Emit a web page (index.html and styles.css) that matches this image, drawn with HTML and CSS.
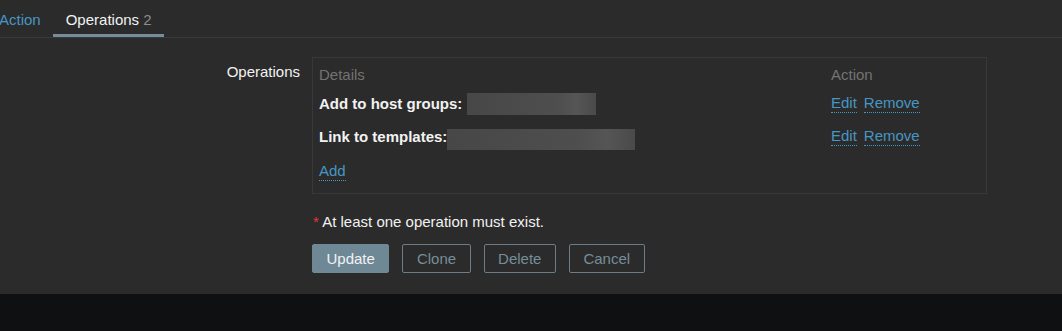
FILE: index.html
```html
<!DOCTYPE html>
<html lang="en">

<head>
    <meta charset="UTF-8">
    <title>Action - Operations</title>
    <link rel="stylesheet" href="styles.css">
</head>

<body>
    <div class="page">
        <ul class="tabs">
            <li><a href="#">Action</a></li>
            <li class="active"><a href="#">Operations <span class="count">2</span></a></li>
        </ul>

        <form class="form">
            <div class="form-row">
                <label class="form-label">Operations</label>
                <div class="form-field">
                    <div class="op-table">
                        <div class="op-head">Details</div>
                        <div class="op-head">Action</div>

                        <div class="op-cell"><b>Add to host groups:</b><span class="hidden-val w1"></span></div>
                        <div class="op-cell"><a class="link" href="#">Edit</a><a class="link" href="#">Remove</a></div>

                        <div class="op-cell"><b>Link to templates:</b><span class="hidden-val w2"></span></div>
                        <div class="op-cell"><a class="link" href="#">Edit</a><a class="link" href="#">Remove</a></div>

                        <div class="op-cell add-cell"><a class="link" href="#">Add</a></div>
                    </div>

                    <p class="note"><span class="req">*</span> At least one operation must exist.</p>

                    <div class="buttons">
                        <button type="submit" class="btn primary">Update</button>
                        <button type="button" class="btn alt">Clone</button>
                        <button type="button" class="btn alt">Delete</button>
                        <button type="button" class="btn alt">Cancel</button>
                    </div>
                </div>
            </div>
        </form>
    </div>
    <div class="footer"></div>
</body>

</html>
```

FILE: styles.css
```css
body {
    font-family: Arial, "Liberation Sans", sans-serif;
    font-size: 15px;
    line-height: 18px;
    background-color: #0e1012;
    color: #f2f2f2;
    margin: 0;
    padding: 0;
}

.page {
    background-color: #2b2b2b;
    height: 294px;
    overflow: hidden;
}

.footer {
    height: 37px;
}

.tabs {
    display: flex;
    list-style: none;
    margin: 0 0 0 -14px;
    padding: 0;
    border-bottom: 1px solid #393939;
}

.tabs a {
    display: block;
    padding: 5px 12px 0 13px;
    line-height: 29px;
    border-bottom: 3px solid transparent;
    color: #4796c4;
    text-decoration: none;
}

.tabs .active a {
    color: #f2f2f2;
    border-bottom-color: #768d99;
}

.count {
    color: #8b8b8b;
}

.form {
    margin-top: 19px;
}

.form-row {
    display: grid;
    grid-template-columns: 300px 1fr;
    column-gap: 12px;
}

.form-label {
    text-align: right;
    padding-top: 6px;
}

.form-field {
    width: 675px;
}

.op-table {
    display: grid;
    grid-template-columns: 1fr 161px;
    border: 1px solid #383838;
    padding-bottom: 5px;
}

.op-head {
    color: #737373;
    padding: 8px 6px 3px;
}

.op-cell {
    display: flex;
    align-items: center;
    gap: 7px;
    height: 33px;
    padding: 0 6px;
    white-space: nowrap;
}

.op-cell b {
    font-weight: bold;
}

.add-cell {
    grid-column: 1 / 3;
    height: 35px;
    padding-top: 2px;
    box-sizing: border-box;
}

.hidden-val {
    display: block;
    background: linear-gradient(90deg, #474747, #4e4e4e 70%, #555 85%, #4a4a4a);
}

.w1 {
    width: 129px;
    height: 22px;
    margin-left: -2px;
}

.w2 {
    width: 188px;
    height: 21px;
    margin: 6px 0 0 -7px;
}

.link {
    color: #4796c4;
    text-decoration: none;
    border-bottom: 1px dotted #4796c4;
}

.note {
    margin: 19px 0 0 1px;
}

.req {
    color: #e33734;
}

.buttons {
    display: flex;
    gap: 13px;
    margin-top: 13px;
}

.btn {
    font-family: Arial, "Liberation Sans", sans-serif;
    font-size: 15px;
    height: 29px;
    padding: 0 13.5px;
    border: 1px solid #768d99;
    border-radius: 2px;
    cursor: pointer;
}

.primary {
    background-color: #6f8896;
    border-color: #6f8896;
    color: #f2f2f2;
}

.alt {
    background-color: transparent;
    border-color: #6c7d86;
    color: #768d99;
}
```
